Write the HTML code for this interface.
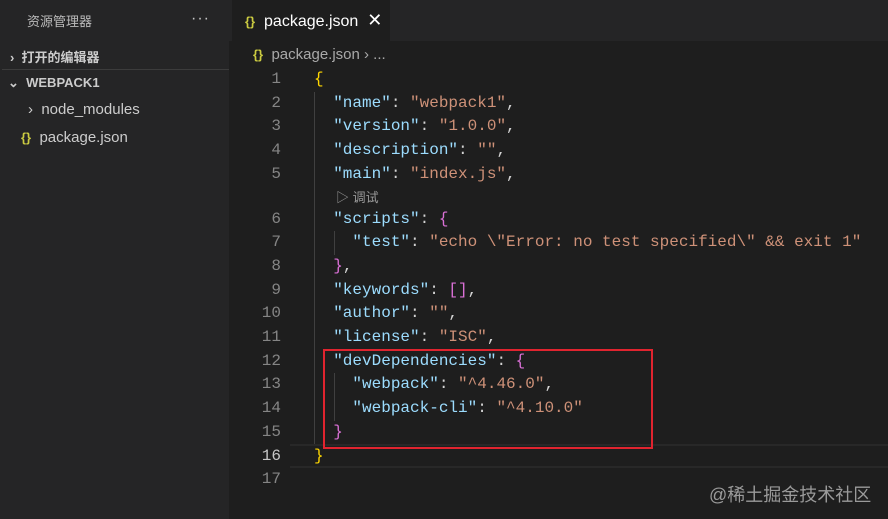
<!DOCTYPE html>
<html><head><meta charset="utf-8"><style>
*{margin:0;padding:0;box-sizing:border-box}
body{width:888px;height:519px;background:#1e1e1e;overflow:hidden;position:relative;font-family:"Liberation Sans","Noto Sans CJK SC",sans-serif}
.side{position:absolute;left:0;top:0;width:229px;height:519px;background:#252526}
.t{position:absolute;white-space:nowrap}
.tabs{position:absolute;left:229px;top:0;width:659px;height:41px;background:#252526}
.tab{position:absolute;left:232px;top:0;width:158px;height:41px;background:#1e1e1e}
.ln{position:absolute;left:240px;width:41px;text-align:right;color:#858585;font:16px "Liberation Mono",monospace;height:23.7px;line-height:23.7px}
.cd{position:absolute;left:314px;white-space:pre;font:16px "Liberation Mono",monospace;height:23.7px;line-height:23.7px;color:#d4d4d4}
.k{color:#9cdcfe}.s{color:#ce9178}.y{color:#ffd700}.p{color:#da70d6}
.g{position:absolute;width:1px;background:#404040}
</style></head><body>
<div class="side"></div>
<div class="t" style="left:27px;top:11px;font-size:13px;color:#bbbbbb">资源管理器</div>
<div class="t" style="left:191px;top:10px;font-size:16px;color:#c5c5c5;letter-spacing:1px">···</div>
<div class="t" style="left:10px;top:47px;font-size:13px;color:#cccccc;font-weight:bold">›&nbsp; 打开的编辑器</div>
<div style="position:absolute;left:2px;top:69px;width:227px;height:1px;background:#3c3c3c"></div>
<div class="t" style="left:8px;top:75px;font-size:13px;color:#cccccc;font-weight:bold">⌄&nbsp; WEBPACK1</div>
<div class="t" style="left:28px;top:101px;font-size:15px;color:#cccccc">›&nbsp; node_modules</div>
<div class="t" style="left:21px;top:129px;font-size:15px;color:#cccccc"><span style="color:#cbcb41;font-weight:bold;font-size:13px">{}</span>&nbsp; package.json</div>
<div class="tabs"></div>
<div class="tab"></div>
<div class="t" style="left:245px;top:10px;font-size:16px;color:#ffffff"><span style="color:#cbcb41;font-weight:bold;font-size:13px">{}</span>&nbsp; package.json &nbsp;<span style="font-size:18px">✕</span></div>
<div class="t" style="left:253px;top:46px;font-size:15px;color:#a9a9a9"><span style="color:#cbcb41;font-weight:bold;font-size:13px">{}</span>&nbsp; package.json › ...</div>
<div style="position:absolute;left:290px;top:444px;width:598px;height:24px;border-top:2px solid #282828;border-bottom:2px solid #282828"></div>
<div class="g" style="left:314px;top:92px;height:352px"></div>
<div class="g" style="left:334px;top:231px;height:24px"></div>
<div class="g" style="left:334px;top:373px;height:48px"></div>
<div class="t" style="left:336px;top:187px;font-size:13px;color:#999999">▷ 调试</div>

<div class="ln" style="top:68px">1</div><div class="cd" style="top:68px"><span class="y">{</span></div>
<div class="ln" style="top:91.7px">2</div><div class="cd" style="top:91.7px">  <span class="k">"name"</span>: <span class="s">"webpack1"</span>,</div>
<div class="ln" style="top:115.4px">3</div><div class="cd" style="top:115.4px">  <span class="k">"version"</span>: <span class="s">"1.0.0"</span>,</div>
<div class="ln" style="top:139.1px">4</div><div class="cd" style="top:139.1px">  <span class="k">"description"</span>: <span class="s">""</span>,</div>
<div class="ln" style="top:162.8px">5</div><div class="cd" style="top:162.8px">  <span class="k">"main"</span>: <span class="s">"index.js"</span>,</div>
<div class="ln" style="top:207.5px">6</div><div class="cd" style="top:207.5px">  <span class="k">"scripts"</span>: <span class="p">{</span></div>
<div class="ln" style="top:231.2px">7</div><div class="cd" style="top:231.2px">    <span class="k">"test"</span>: <span class="s">"echo \"Error: no test specified\" &amp;&amp; exit 1"</span></div>
<div class="ln" style="top:254.9px">8</div><div class="cd" style="top:254.9px">  <span class="p">}</span>,</div>
<div class="ln" style="top:278.6px">9</div><div class="cd" style="top:278.6px">  <span class="k">"keywords"</span>: <span class="p">[]</span>,</div>
<div class="ln" style="top:302.3px">10</div><div class="cd" style="top:302.3px">  <span class="k">"author"</span>: <span class="s">""</span>,</div>
<div class="ln" style="top:326px">11</div><div class="cd" style="top:326px">  <span class="k">"license"</span>: <span class="s">"ISC"</span>,</div>
<div class="ln" style="top:349.7px">12</div><div class="cd" style="top:349.7px">  <span class="k">"devDependencies"</span>: <span class="p">{</span></div>
<div class="ln" style="top:373.4px">13</div><div class="cd" style="top:373.4px">    <span class="k">"webpack"</span>: <span class="s">"^4.46.0"</span>,</div>
<div class="ln" style="top:397.1px">14</div><div class="cd" style="top:397.1px">    <span class="k">"webpack-cli"</span>: <span class="s">"^4.10.0"</span></div>
<div class="ln" style="top:420.8px">15</div><div class="cd" style="top:420.8px">  <span class="p">}</span></div>
<div class="ln" style="top:444.5px;color:#c6c6c6">16</div><div class="cd" style="top:444.5px"><span class="y">}</span></div>
<div class="ln" style="top:468.2px">17</div>
<div style="position:absolute;left:323px;top:349px;width:330px;height:100px;border:2px solid #e0242f"></div>
<div class="t" style="left:709px;top:481px;font-size:18px;color:#9a9a9a">@稀土掘金技术社区</div>
</body></html>
